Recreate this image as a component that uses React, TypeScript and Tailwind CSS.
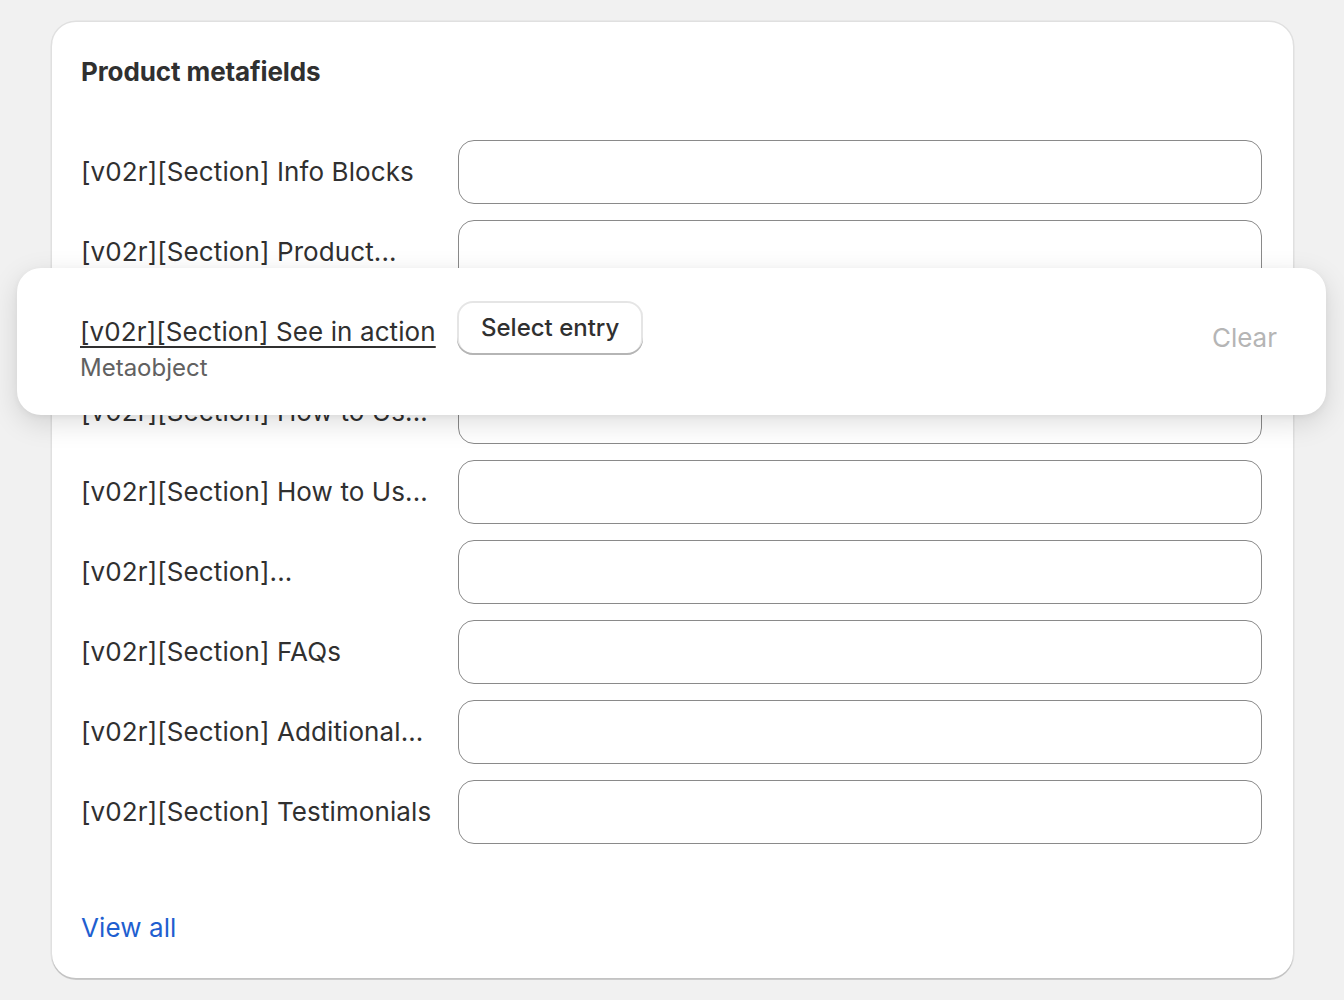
import React from "react";

const rows = [
  "[v02r][Section] Info Blocks",
  "[v02r][Section] Product...",
  "[v02r][Section] See in action",
  "[v02r][Section] How to Us...",
  "[v02r][Section] How to Us...",
  "[v02r][Section]...",
  "[v02r][Section] FAQs",
  "[v02r][Section] Additional...",
  "[v02r][Section] Testimonials",
];

export default function App() {
  return (
    <div
      className="relative w-[1344px] h-[1000px] bg-[#f1f1f1] pt-[22px] px-[51px] overflow-hidden text-[#303030]"
      style={{ fontFamily: "Inter, 'Noto Sans', sans-serif" }}
    >
      <div className="bg-white rounded-[24px] shadow-[0_2px_0_0_rgba(0,0,0,0.13),0_0_0_1.5px_rgba(0,0,0,0.07)] pt-[32px] pb-[32px] pl-[29px] pr-[31px] ml-[1px]">
        <h2 className="text-[26px] leading-[36px] font-[650] tracking-[-0.1px]">Product metafields</h2>
        <div className="mt-[50px] flex flex-col gap-[16px]">
          {rows.map((r, i) => (
            <div key={i} className="flex items-center gap-[16px] h-[64px]">
              <div className="w-[361px] text-[26px] leading-[36px] tracking-[0.1px] whitespace-nowrap overflow-hidden">{r}</div>
              <div className="flex-1 h-[64px] rounded-[16px] border border-[#8a8a8a] bg-white" />
            </div>
          ))}
        </div>
        <div className="mt-[66px] text-[26px] leading-[36px] tracking-[0.1px] text-[#1f5fd0]">View all</div>
      </div>

      <div className="absolute left-[17px] top-[268px] w-[1309px] h-[147px] bg-white rounded-[24px] shadow-[0_8px_28px_rgba(0,0,0,0.13),0_2px_6px_rgba(0,0,0,0.05)] flex pl-[63px] pr-[49px]">
        <div className="w-[377px] pt-[46px] shrink-0">
          <div className="text-[26px] leading-[36px] tracking-[0.1px] underline underline-offset-[5px] decoration-[2px] whitespace-nowrap">
            [v02r][Section] See in action
          </div>
          <div className="text-[24px] leading-[36px] text-[#616161]">Metaobject</div>
        </div>
        <div className="pt-[33px]">
          <div className="h-[54px] px-[24px] flex items-center rounded-[16px] bg-white text-[24px] font-medium shadow-[inset_0_-2px_0_0_#b5b5b5,inset_0_0_0_2px_rgba(0,0,0,0.1)]">
            Select entry
          </div>
        </div>
        <div className="flex-1" />
        <div className="pt-[52px] text-[26px] leading-[36px] text-[#b5b5b5]">Clear</div>
      </div>
    </div>
  );
}
